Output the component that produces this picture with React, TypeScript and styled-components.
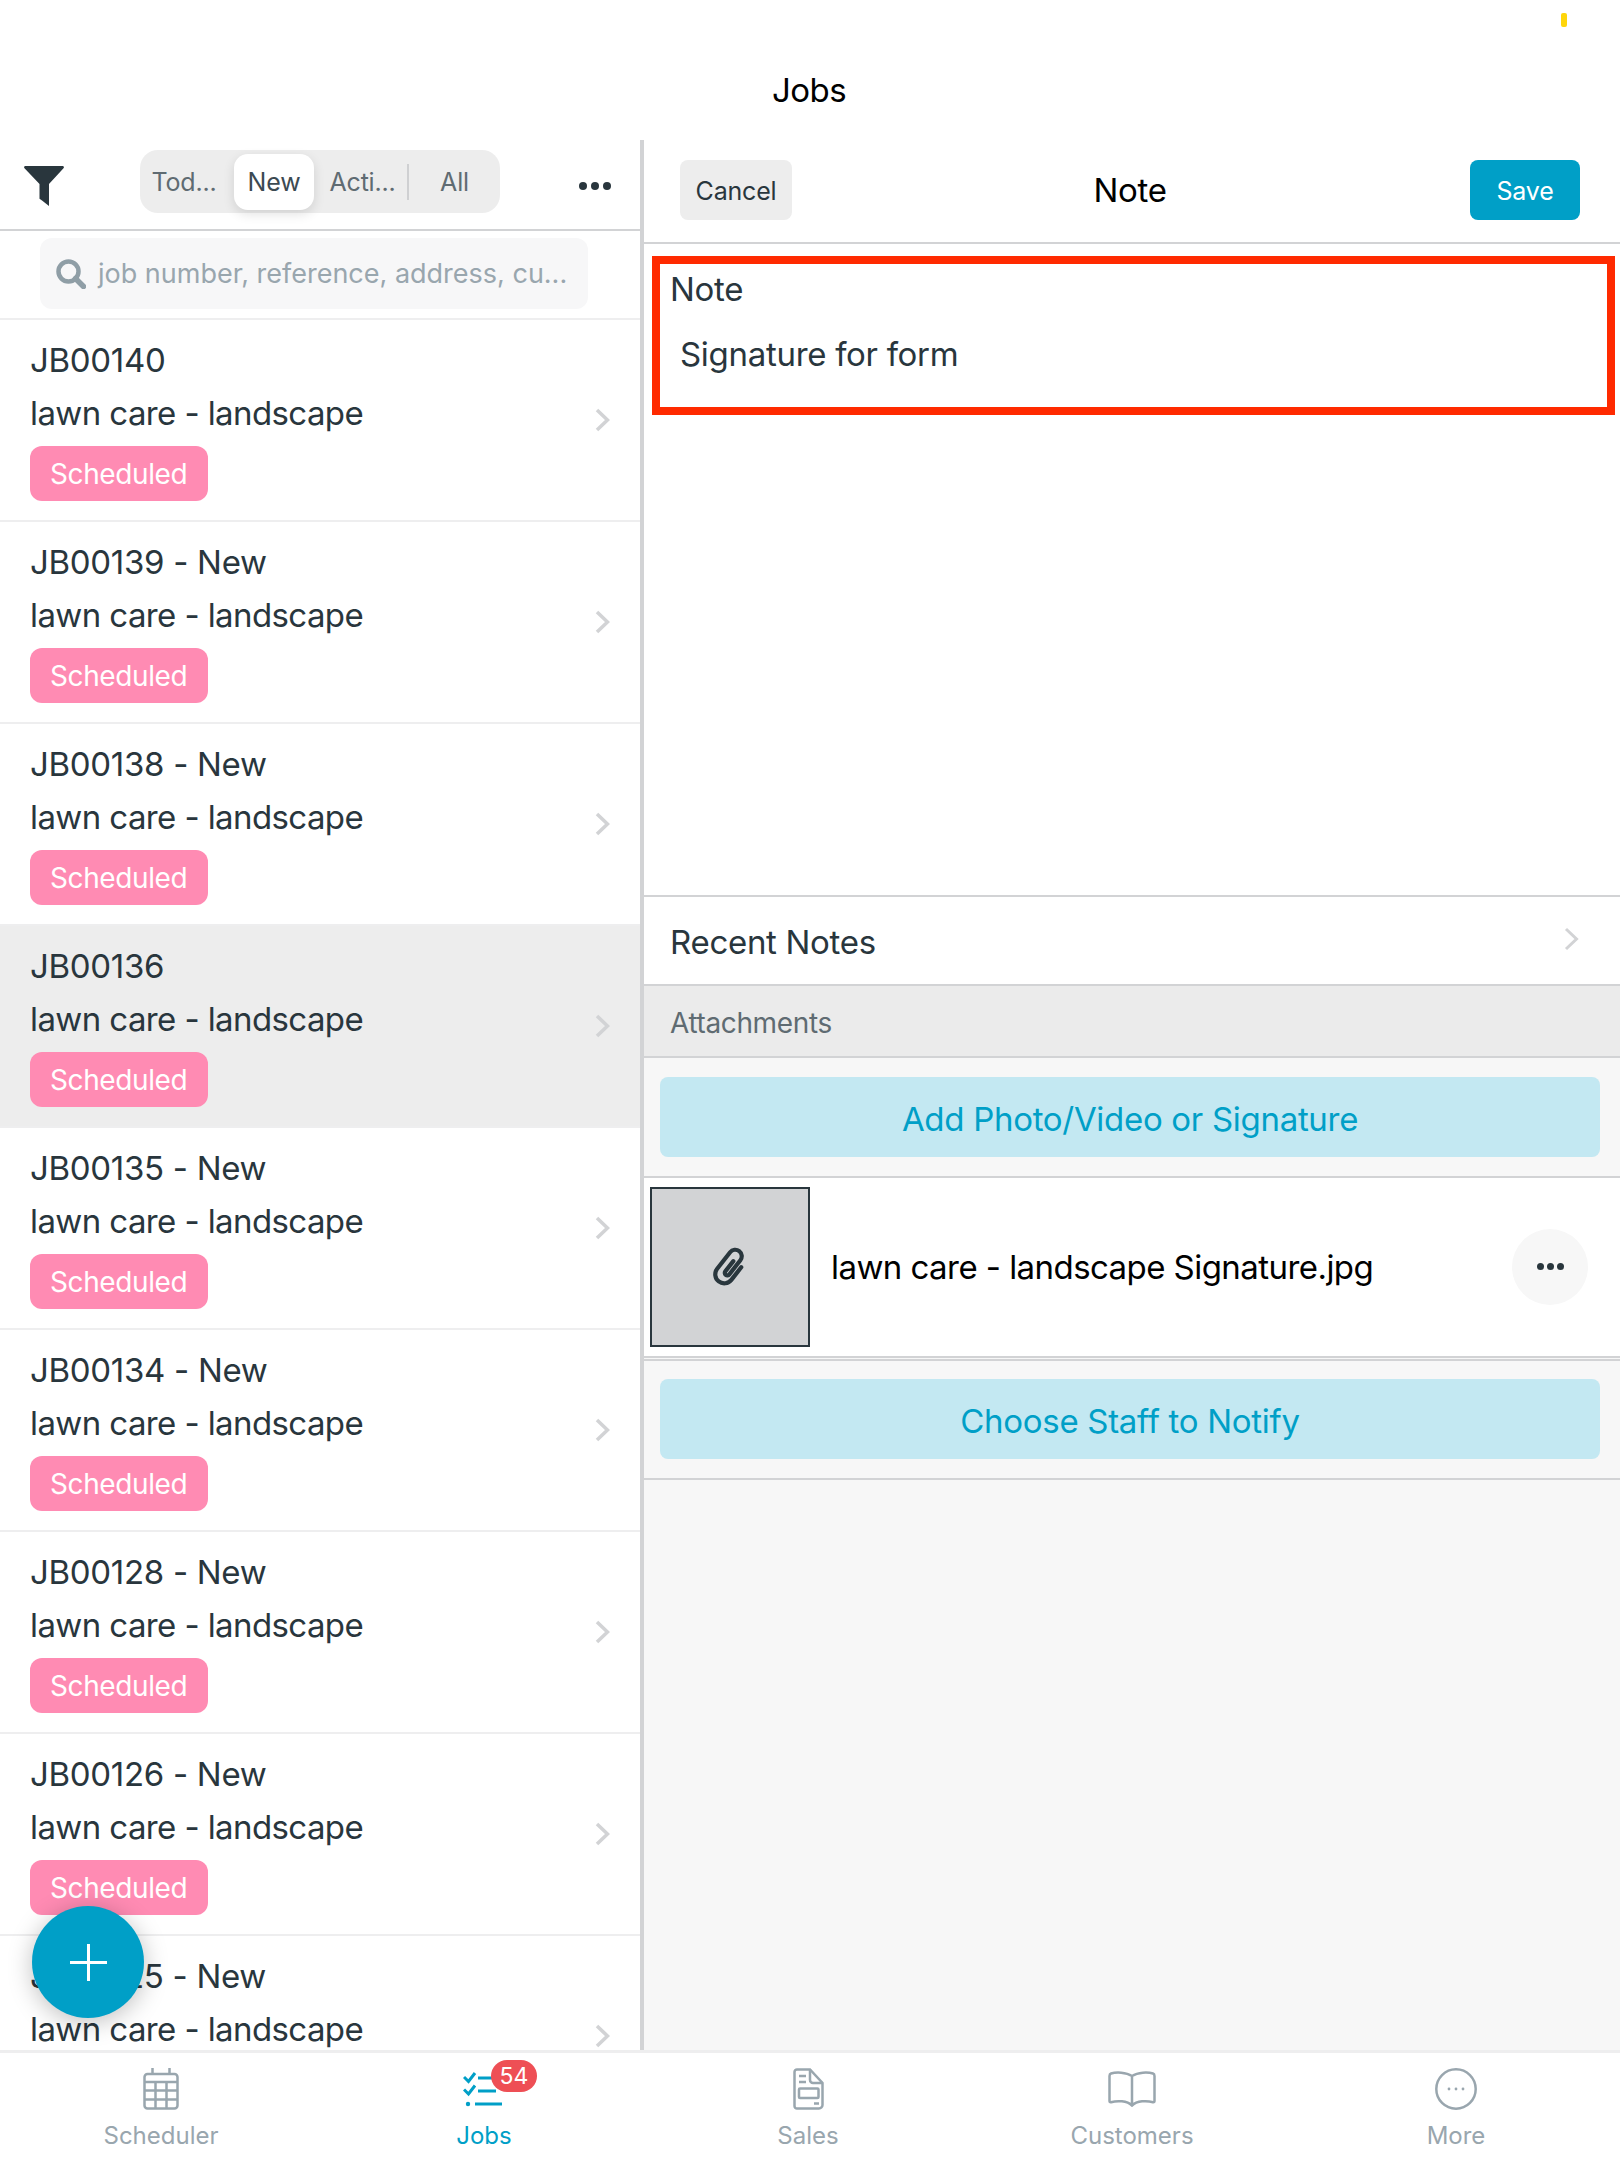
import styled, { createGlobalStyle } from "styled-components";

const ink = "#29363d";
const blue = "#009fc7";
const muted = "#99a6ae";
const line = "#d2d3d5";

const jobs = [
  { id: "JB00140", selected: false },
  { id: "JB00139 - New", selected: false },
  { id: "JB00138 - New", selected: false },
  { id: "JB00136", selected: true },
  { id: "JB00135 - New", selected: false },
  { id: "JB00134 - New", selected: false },
  { id: "JB00128 - New", selected: false },
  { id: "JB00126 - New", selected: false },
  { id: "JB00125 - New", selected: false },
];

const GlobalStyle = createGlobalStyle`
  html, body {
    margin: 0;
    padding: 0;
    background: #fff;
    font-family: Inter, "Liberation Sans", sans-serif;
    color: ${ink};
  }
  * {
    box-sizing: border-box;
  }
`;

const Page = styled.div`
  position: relative;
  width: 1620px;
  height: 2160px;
  display: flex;
  flex-direction: column;
  overflow: hidden;
  background: #fff;
`;

const StatusMark = styled.div`
  position: absolute;
  top: 13px;
  left: 1561px;
  width: 6px;
  height: 14px;
  border-radius: 2px;
  background: #ffd60a;
`;

const TopBar = styled.header`
  height: 140px;
  flex: none;
  padding: 70px 2px 0 0;
  text-align: center;
  font-size: 33px;
  line-height: 40px;
  color: #000;
  letter-spacing: -0.5px;
`;

const Main = styled.main`
  flex: 1;
  min-height: 0;
  display: flex;
`;

const LeftPanel = styled.section`
  position: relative;
  width: 644px;
  flex: none;
  border-right: 4px solid ${line};
  overflow: hidden;
`;

const Toolbar = styled.div`
  height: 91px;
  display: flex;
  align-items: center;
  padding: 3px 29px 0 24px;
  border-bottom: 2px solid ${line};
`;

const Segments = styled.div`
  align-self: flex-start;
  margin: 7px 0 0 76px;
  width: 360px;
  height: 63px;
  display: grid;
  grid-template-columns: 94px 80px 95px 91px;
  align-items: center;
  background: #ededed;
  border-radius: 18px;
`;

const Segment = styled.div<{ $active?: boolean; $divided?: boolean; $nudge?: number }>`
  height: ${(p) => (p.$active ? "56px" : "36px")};
  display: flex;
  align-items: center;
  justify-content: center;
  font-size: 25px;
  letter-spacing: -0.2px;
  padding: 0 ${(p) => (p.$nudge && p.$nudge < 0 ? -p.$nudge : 0)}px 0
    ${(p) => (p.$nudge && p.$nudge > 0 ? p.$nudge : 0)}px;
  color: ${(p) => (p.$active ? "#3c4a52" : "#5f6b72")};
  background: ${(p) => (p.$active ? "#fff" : "transparent")};
  border-radius: ${(p) => (p.$active ? "14px" : "0")};
  border-right: ${(p) => (p.$divided ? "2px solid #cfd0d2" : "none")};
  box-shadow: ${(p) => (p.$active ? "0 4px 12px rgba(0, 0, 0, 0.12)" : "none")};
`;

const MoreDots = styled.div`
  margin-left: auto;
  display: flex;
  gap: 4px;
`;

const Dot = styled.span<{ $size?: number }>`
  width: ${(p) => p.$size ?? 8}px;
  height: ${(p) => p.$size ?? 8}px;
  border-radius: 50%;
  background: ${ink};
`;

const SearchWrap = styled.div`
  height: 89px;
  padding: 7px 52px 9px 40px;
  border-bottom: 2px solid #eeeeef;
`;

const SearchBox = styled.div`
  height: 71px;
  display: flex;
  align-items: center;
  gap: 12px;
  padding-left: 16px;
  border-radius: 12px;
  background: #f7f7f8;
  font-size: 27px;
  color: ${muted};
  white-space: nowrap;
`;

const JobRow = styled.div<{ $selected?: boolean }>`
  height: 202px;
  display: flex;
  align-items: center;
  padding: 0 30px;
  background: ${(p) => (p.$selected ? "#ededed" : "#fff")};
  border-bottom: 2px solid #eeeeef;
`;

const JobText = styled.div`
  flex: 1;
  display: flex;
  flex-direction: column;
  align-items: flex-start;
`;

const JobLine = styled.div<{ $tight?: boolean }>`
  font-size: 33px;
  line-height: ${(p) => (p.$tight ? "44px" : "42px")};
  color: ${ink};
  letter-spacing: ${(p) => (p.$tight ? "-0.6px" : "-0.3px")};
  & + & {
    margin-top: 10px;
  }
`;

const Badge = styled.div`
  margin-top: 11px;
  height: 55px;
  padding: 0 21px 0 20px;
  display: flex;
  align-items: center;
  border-radius: 12px;
  background: #ff8bb3;
  color: #fff;
  font-size: 28px;
  letter-spacing: -0.4px;
`;

const Fab = styled.div`
  position: absolute;
  left: 32px;
  top: 1766px;
  width: 112px;
  height: 112px;
  display: flex;
  align-items: center;
  justify-content: center;
  border-radius: 50%;
  background: ${blue};
  box-shadow: 0 4px 24px rgba(0, 0, 0, 0.25);
`;

const RightPanel = styled.section`
  flex: 1;
  display: flex;
  flex-direction: column;
  background: #f7f7f7;
`;

const NoteHeader = styled.div`
  height: 104px;
  flex: none;
  display: flex;
  align-items: center;
  justify-content: space-between;
  padding: 0 40px 2px 36px;
  background: #fff;
  border-bottom: 2px solid ${line};
`;

const HeaderButton = styled.div<{ $primary?: boolean }>`
  width: ${(p) => (p.$primary ? "110px" : "112px")};
  height: 60px;
  padding-top: 1px;
  display: flex;
  align-items: center;
  justify-content: center;
  border-radius: 8px;
  font-size: 25px;
  letter-spacing: -0.2px;
  color: ${(p) => (p.$primary ? "#fff" : ink)};
  background: ${(p) => (p.$primary ? blue : "#ededed")};
`;

const HeaderTitle = styled.div`
  margin-right: 2px;
  font-size: 33px;
  color: #000;
  letter-spacing: -0.3px;
`;

const NoteBody = styled.div`
  height: 651px;
  flex: none;
  padding: 12px 5px 0 8px;
  background: #fff;
`;

const NoteBox = styled.div`
  height: 159px;
  border: 8px solid #ff2a00;
  padding: 5px 0 0 10px;
`;

const NoteLabel = styled.div`
  font-size: 33px;
  line-height: 40px;
  letter-spacing: -0.3px;
`;

const NoteText = styled.div`
  margin: 25px 0 0 10px;
  font-size: 33px;
  line-height: 40px;
  letter-spacing: -0.3px;
`;

const RecentRow = styled.div`
  height: 91px;
  flex: none;
  display: flex;
  align-items: center;
  justify-content: space-between;
  padding: 2px 41px 0 26px;
  background: #fff;
  border-top: 2px solid ${line};
  border-bottom: 2px solid ${line};
  font-size: 33px;
  letter-spacing: -0.3px;
  svg {
    margin-bottom: 6px;
  }
`;

const SectionHeader = styled.div`
  height: 72px;
  flex: none;
  display: flex;
  align-items: center;
  padding: 3px 0 0 26px;
  background: #ebebeb;
  border-bottom: 2px solid ${line};
  font-size: 28px;
  color: #5f6b72;
  letter-spacing: -0.37px;
`;

const ButtonBand = styled.div<{ $top: number }>`
  flex: none;
  padding: ${(p) => p.$top}px 20px 19px 16px;
  border-bottom: 2px solid ${line};
`;

const WideButton = styled.div`
  height: 80px;
  padding-top: 3px;
  display: flex;
  align-items: center;
  justify-content: center;
  border-radius: 8px;
  background: #c3e8f2;
  color: ${blue};
  font-size: 33px;
  letter-spacing: -0.3px;
`;

const AttachmentRow = styled.div`
  height: 180px;
  flex: none;
  display: flex;
  align-items: center;
  padding: 0 32px 1px 6px;
  background: #fff;
  border-bottom: 2px solid ${line};
`;

const Thumb = styled.div`
  width: 160px;
  height: 160px;
  flex: none;
  display: flex;
  align-items: center;
  justify-content: center;
  background: #d2d3d5;
  border: 2px solid ${ink};
`;

const FileName = styled.div`
  margin-left: 21px;
  font-size: 33px;
  color: #000;
  letter-spacing: -0.56px;
`;

const CircleButton = styled.div`
  width: 76px;
  height: 76px;
  margin-left: auto;
  display: flex;
  align-items: center;
  justify-content: center;
  gap: 3px;
  border-radius: 50%;
  background: #f7f7f7;
`;

const BandGap = styled.div`
  height: 3px;
  flex: none;
  border-bottom: 2px solid ${line};
`;

const TabBar = styled.nav`
  height: 110px;
  flex: none;
  display: grid;
  grid-template-columns: 322px repeat(4, 324px);
  background: #fff;
  border-top: 3px solid #eeeeef;
`;

const Tab = styled.div<{ $active?: boolean }>`
  display: flex;
  flex-direction: column;
  align-items: center;
  padding-top: 15px;
  color: ${(p) => (p.$active ? blue : muted)};
  font-size: 24px;
  line-height: 30px;
`;

const TabIcon = styled.div`
  position: relative;
  height: 42px;
  margin-bottom: 11px;
  display: flex;
  align-items: center;
`;

const CountBadge = styled.div`
  position: absolute;
  left: 28px;
  top: -8px;
  width: 46px;
  height: 32px;
  display: flex;
  align-items: center;
  justify-content: center;
  border-radius: 16px;
  background: #ee4f55;
  color: #fff;
  font-size: 23px;
`;

const Chevron = ({ weight = 3 }: { weight?: number }) => (
  <svg width="15" height="24" viewBox="0 0 15 24" fill="none">
    <path d="M2 2l10.500 10L2 22" stroke="#d2d3d5" strokeWidth={weight} />
  </svg>
);

const FilterIcon = () => (
  <svg width="40" height="40" viewBox="0 0 40 40">
    <path d="M1.500 0h37c1.300 0 1.900 1.400 1 2.300L25 18v22l-7-5.500-2.500-1.800V18L.5 2.300C-.4 1.400.2 0 1.500 0z" fill={ink} />
  </svg>
);

const SearchIcon = () => (
  <svg width="30" height="30" viewBox="0 0 30 30" fill="none" stroke="#8f9ea6">
    <circle cx="12.500" cy="12.500" r="10" strokeWidth="4.500" />
    <path d="M19.500 19.500l8 8" strokeWidth="5.500" strokeLinecap="round" />
  </svg>
);

const PaperclipIcon = () => (
  <svg width="48" height="48" viewBox="0 0 48 48" fill="none">
    <path
      transform="translate(24 24) rotate(38) translate(-11.500 -20.700)"
      d="M20.500 14v16a9 9 0 0 1-18 0V9a6.500 6.500 0 0 1 13 0v18a2.500 2.500 0 0 1-5 0V14"
      stroke={ink}
      strokeWidth="4.200"
      strokeLinecap="round"
    />
  </svg>
);

const CalendarIcon = () => (
  <svg width="36" height="42" viewBox="0 0 36 42" fill="none" stroke={muted} strokeWidth="2.500">
    <rect x="1.500" y="6" width="33" height="34.500" rx="3" />
    <path d="M1.500 14h33M1.500 22.500h33M1.500 31.500h33M12.500 14v26.500M23.500 14v26.500M9.500 0v6M26.500 0v6" />
  </svg>
);

const ChecklistIcon = () => (
  <svg width="42" height="36" viewBox="0 0 42 36" fill="none" stroke={blue} strokeWidth="3">
    <path d="M1 6l4.500 4.500L12 2M1 18.500L5.500 23 12 14.500M15 7h18M15 20h18M12 33h27" />
    <circle cx="5" cy="33" r="2.200" fill={blue} stroke="none" />
  </svg>
);

const SalesIcon = () => (
  <svg width="31" height="42" viewBox="0 0 31 42" fill="none" stroke={muted} strokeWidth="2.500">
    <path d="M4 1.500h13L29.500 15v22a3.500 3.500 0 0 1-3.500 3.500H4A2.500 2.500 0 0 1 1.500 38V4A2.500 2.500 0 0 1 4 1.500z" />
    <path d="M17 1.500V12a3 3 0 0 0 3 3h9.500M6 8h7M6 14h7M21 35.500h5" />
    <rect x="6" y="20.500" width="19.500" height="9.500" rx="1" />
  </svg>
);

const BookIcon = () => (
  <svg width="48" height="36" viewBox="0 0 48 36" fill="none" stroke={muted} strokeWidth="2.500">
    <path d="M24 5C18 1 8 1 3 2.500Q1.500 3 1.500 5v25q0 1.500 1.500 1.200C9 29.500 19 29.500 24 34.500c5-5 15-5 21-3.300q1.500.3 1.500-1.200V5q0-2-1.500-2.500C40 1 30 1 24 5zM24 5v29.500" />
  </svg>
);

const MoreIcon = () => (
  <svg width="42" height="42" viewBox="0 0 42 42" fill="none">
    <circle cx="21" cy="21" r="19.700" stroke={muted} strokeWidth="2.500" />
    <g fill={muted}>
      <circle cx="14" cy="21" r="1.400" />
      <circle cx="21" cy="21" r="1.400" />
      <circle cx="28" cy="21" r="1.400" />
    </g>
  </svg>
);

const PlusIcon = () => (
  <svg width="37" height="37" viewBox="0 0 37 37">
    <path d="M17 0h3v17h17v3H20v17h-3V20H0v-3h17z" fill="#fff" />
  </svg>
);

const App = () => (
  <Page>
    <GlobalStyle />
    <StatusMark />
    <TopBar>Jobs</TopBar>
    <Main>
      <LeftPanel>
        <Toolbar>
          <FilterIcon />
          <Segments>
            <Segment $nudge={-6}>Tod...</Segment>
            <Segment $active>New</Segment>
            <Segment $divided $nudge={4}>Acti...</Segment>
            <Segment>All</Segment>
          </Segments>
          <MoreDots>
            <Dot />
            <Dot />
            <Dot />
          </MoreDots>
        </Toolbar>
        <SearchWrap>
          <SearchBox>
            <SearchIcon />
            job number, reference, address, cu...
          </SearchBox>
        </SearchWrap>
        {jobs.map((job) => (
          <JobRow key={job.id} $selected={job.selected}>
            <JobText>
              <JobLine>{job.id}</JobLine>
              <JobLine $tight>lawn care - landscape</JobLine>
              <Badge>Scheduled</Badge>
            </JobText>
            <Chevron weight={3.6} />
          </JobRow>
        ))}
        <Fab>
          <PlusIcon />
        </Fab>
      </LeftPanel>
      <RightPanel>
        <NoteHeader>
          <HeaderButton>Cancel</HeaderButton>
          <HeaderTitle>Note</HeaderTitle>
          <HeaderButton $primary>Save</HeaderButton>
        </NoteHeader>
        <NoteBody>
          <NoteBox>
            <NoteLabel>Note</NoteLabel>
            <NoteText>Signature for form</NoteText>
          </NoteBox>
        </NoteBody>
        <RecentRow>
          Recent Notes
          <Chevron />
        </RecentRow>
        <SectionHeader>Attachments</SectionHeader>
        <ButtonBand $top={19}>
          <WideButton>Add Photo/Video or Signature</WideButton>
        </ButtonBand>
        <AttachmentRow>
          <Thumb>
            <PaperclipIcon />
          </Thumb>
          <FileName>lawn care - landscape Signature.jpg</FileName>
          <CircleButton>
            <Dot $size={7} />
            <Dot $size={7} />
            <Dot $size={7} />
          </CircleButton>
        </AttachmentRow>
        <BandGap />
        <ButtonBand $top={18}>
          <WideButton>Choose Staff to Notify</WideButton>
        </ButtonBand>
      </RightPanel>
    </Main>
    <TabBar>
      <Tab>
        <TabIcon>
          <CalendarIcon />
        </TabIcon>
        Scheduler
      </Tab>
      <Tab $active>
        <TabIcon>
          <ChecklistIcon />
          <CountBadge>54</CountBadge>
        </TabIcon>
        Jobs
      </Tab>
      <Tab>
        <TabIcon>
          <SalesIcon />
        </TabIcon>
        Sales
      </Tab>
      <Tab>
        <TabIcon>
          <BookIcon />
        </TabIcon>
        Customers
      </Tab>
      <Tab>
        <TabIcon>
          <MoreIcon />
        </TabIcon>
        More
      </Tab>
    </TabBar>
  </Page>
);

export default App;
